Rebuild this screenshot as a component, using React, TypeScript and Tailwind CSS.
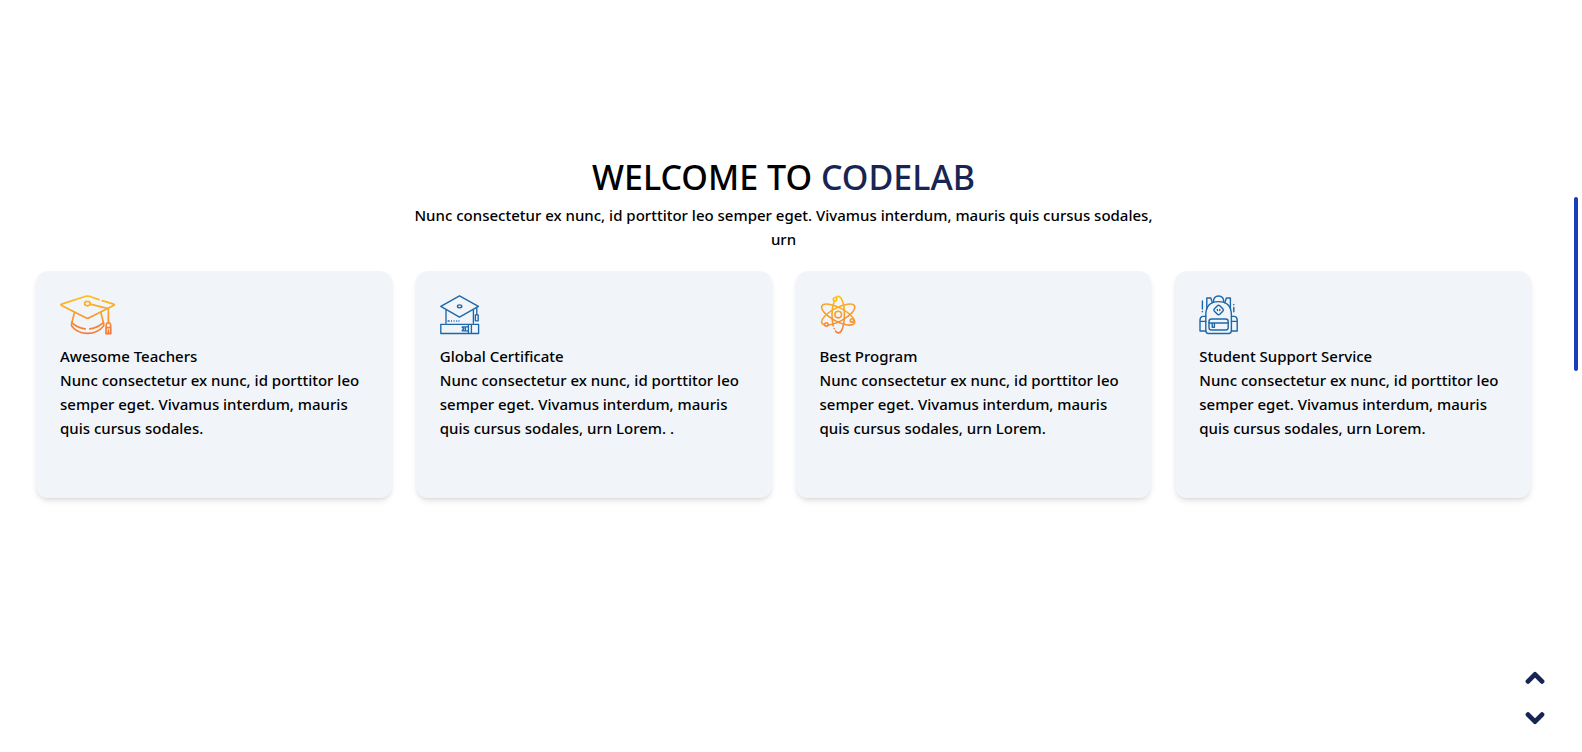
import type { ReactNode } from "react";

function CapIcon() {
  return (
    <svg width="56" height="40" viewBox="0 0 56 40" fill="none" stroke="url(#cap)" strokeWidth="1.7" strokeLinecap="round" strokeLinejoin="round" aria-hidden="true">
      <defs>
        <linearGradient id="cap" gradientUnits="userSpaceOnUse" x1="0" y1="0" x2="0" y2="40">
          <stop offset="0" stopColor="#fbc21c" />
          <stop offset="1" stopColor="#f7743a" />
        </linearGradient>
      </defs>
      <path d="M39 4.6 29.2 1.3q-1.7-.5-3.4 0L1.6 9.1q-1.4.7 0 1.4l24.2 12.3q1.7.9 3.4 0l24.4-12.3q1.4-.7 0-1.4L42.2 5.6" />
      <ellipse cx="27.4" cy="8.6" rx="2.8" ry="2.2" />
      <path d="M30.2 9.2 48.4 13.6V28" />
      <path d="M14.4 17.6 11.6 28.6v2.4q6 7.4 15.9 7.4t16.2-7.4v-2.4l-2.8-11" />
      <path d="M11.8 27.6q5.7 5.4 13.4 6.2M29.8 33.8q7.6-.8 13.5-6.2" />
      <path d="M46.8 28h3.2q1 2.2.8 5v5.6h-4.8V33q-.2-2.8.8-5ZM46 32.6h4.8M48.4 35v3.4" />
    </svg>
  );
}

function CertificateIcon() {
  return (
    <svg width="40" height="40" viewBox="0 0 40 40" fill="none" stroke="#1d67a8" strokeWidth="1.35" strokeLinejoin="round" aria-hidden="true">
      <path d="M19.5.8 38.4 11.4 19.5 22.2.8 11.4Z" />
      <ellipse cx="19.6" cy="11.3" rx="2.2" ry="1.5" />
      <path d="M6 14.6v14.2M33.4 14.6v14.2M36.8 12.2v7.6M35.4 19.8h2.8v6h-2.8Z" />
      <path d="M7.6 26h2M11 26h1M13.6 26h1M16.2 26h1M18.4 26h1" />
      <path d="M.8 29.3h37.8v9.2H.8ZM28.4 29.3v9.2M31.4 29.3v9.2M21.8 31.8h6.4M21.8 35.8h6.4M21.8 31.8l2 2-2 2M25.4 32v3.6" />
    </svg>
  );
}

function AtomIcon() {
  return (
    <svg width="40" height="40" viewBox="0 0 40 40" fill="none" stroke="url(#atom)" strokeWidth="1.6" strokeLinecap="round" aria-hidden="true">
      <defs>
        <linearGradient id="atom" gradientUnits="userSpaceOnUse" x1="0" y1="0" x2="0" y2="40">
          <stop offset="0" stopColor="#fdc513" />
          <stop offset="1" stopColor="#f57540" />
        </linearGradient>
      </defs>
      <path d="M13.2 30.8C11.6 23.4 11.8 13 14.2 6.2M16 2.4C20.4-1.8 24.4 7 24.4 19.6S20.6 42 15.6 36.2M14.2 33.6v.2" />
      <ellipse cx="18.2" cy="19.6" rx="18.4" ry="6.8" transform="rotate(28 18.2 19.6)" />
      <ellipse cx="18.2" cy="19.6" rx="18.4" ry="6.8" transform="rotate(-28 18.2 19.6)" />
      <circle cx="18.2" cy="19.6" r="3.3" />
      <circle cx="15" cy="4.2" r="1.7" fill="#f1f5f9" />
      <circle cx="32" cy="25.4" r="1.7" fill="#f1f5f9" />
      <circle cx="6.4" cy="29.4" r="1.7" fill="#f1f5f9" />
    </svg>
  );
}

function BackpackIcon() {
  return (
    <svg width="40" height="40" viewBox="0 0 40 40" fill="none" stroke="#1d67a8" strokeWidth="1.4" strokeLinecap="round" strokeLinejoin="round" aria-hidden="true">
      <path d="M9.6 38.5q-2.8 0-2.8-3V20q0-13.4 12.8-13.4T32.4 20v15.5q0 3-2.8 3Z" />
      <path d="M14.5 6.8q0-5.8 5.1-5.8t5.1 5.8" />
      <path d="M7.8 13.6V3h4l1.6 4.8M25.8 7.8 27.4 3h4v10.6" />
      <path d="M6.8 21.4H3.6Q1 22 1 25v11h5.8M1 26.4h5.8M32.4 21.4h3.2q2.6.6 2.6 3.6v11h-5.8M32.4 26.4h5.8" />
      <rect x="10" y="24" width="19.2" height="11" rx="2.6" />
      <path d="M10 28h19.2M13.2 28v4.2h2.2V28" />
      <path d="m18.4 10.8q1.2-1.2 2.4 0l3 3q1.2 1.2 0 2.4l-3 3q-1.2 1.2-2.4 0l-3-3q-1.2-1.2 0-2.4Z" />
      <path d="M18.4 14.4v1.2M20.8 14.4v1.2" />
      <path d="M3.4 6v8M3.4 16.4v.4M34.8 9.4v.4M34.8 12.4v4.4" />
    </svg>
  );
}

const features: { title: string; text: string; icon: ReactNode }[] = [
  {
    title: "Awesome Teachers",
    text: "Nunc consectetur ex nunc, id porttitor leo semper eget. Vivamus interdum, mauris quis cursus sodales.",
    icon: <CapIcon />,
  },
  {
    title: "Global Certificate",
    text: "Nunc consectetur ex nunc, id porttitor leo semper eget. Vivamus interdum, mauris quis cursus sodales, urn Lorem. .",
    icon: <CertificateIcon />,
  },
  {
    title: "Best Program",
    text: "Nunc consectetur ex nunc, id porttitor leo semper eget. Vivamus interdum, mauris quis cursus sodales, urn Lorem.",
    icon: <AtomIcon />,
  },
  {
    title: "Student Support Service",
    text: "Nunc consectetur ex nunc, id porttitor leo semper eget. Vivamus interdum, mauris quis cursus sodales, urn Lorem.",
    icon: <BackpackIcon />,
  },
];

function ArrowButton({ label, d }: { label: string; d: string }) {
  return (
    <button type="button" aria-label={label} className="flex size-10 items-center justify-center text-[#172554]">
      <svg width="20" height="14" viewBox="0 0 20 14" fill="none" stroke="currentColor" strokeWidth="4.8" strokeLinecap="round" strokeLinejoin="round" aria-hidden="true">
        <path d={d} />
      </svg>
    </button>
  );
}

export default function App() {
  return (
    <div className="min-h-screen bg-white pr-[15px] font-['Noto_Sans',sans-serif] text-[15px] leading-6 font-medium text-black">
      <main className="px-9 pt-[157px]">
        <header className="mx-auto max-w-[750px] text-center">
          <h1 className="text-[34px] leading-10 font-medium">
            WELCOME TO <span className="text-[#172554]">CODELAB</span>
          </h1>
          <p className="mt-1.5">
            Nunc consectetur ex nunc, id porttitor leo semper eget. Vivamus interdum, mauris quis cursus sodales, urn
          </p>
        </header>
        <section className="mt-5 grid gap-6 sm:grid-cols-2 lg:grid-cols-4">
          {features.map((feature) => (
            <article key={feature.title} className="min-h-[227px] rounded-xl bg-slate-100 p-6 shadow-md">
              {feature.icon}
              <h2 className="mt-[9px]">{feature.title}</h2>
              <p>{feature.text}</p>
            </article>
          ))}
        </section>
      </main>
      <div className="fixed top-[197px] right-1 h-[174px] w-1 rounded-full bg-blue-800" />
      <nav aria-label="Page sections" className="fixed right-[27px] bottom-[14px] flex flex-col">
        <ArrowButton label="Previous section" d="M3 10.4 10 3.4 17 10.4" />
        <ArrowButton label="Next section" d="M3 3.6 10 10.6 17 3.6" />
      </nav>
    </div>
  );
}
